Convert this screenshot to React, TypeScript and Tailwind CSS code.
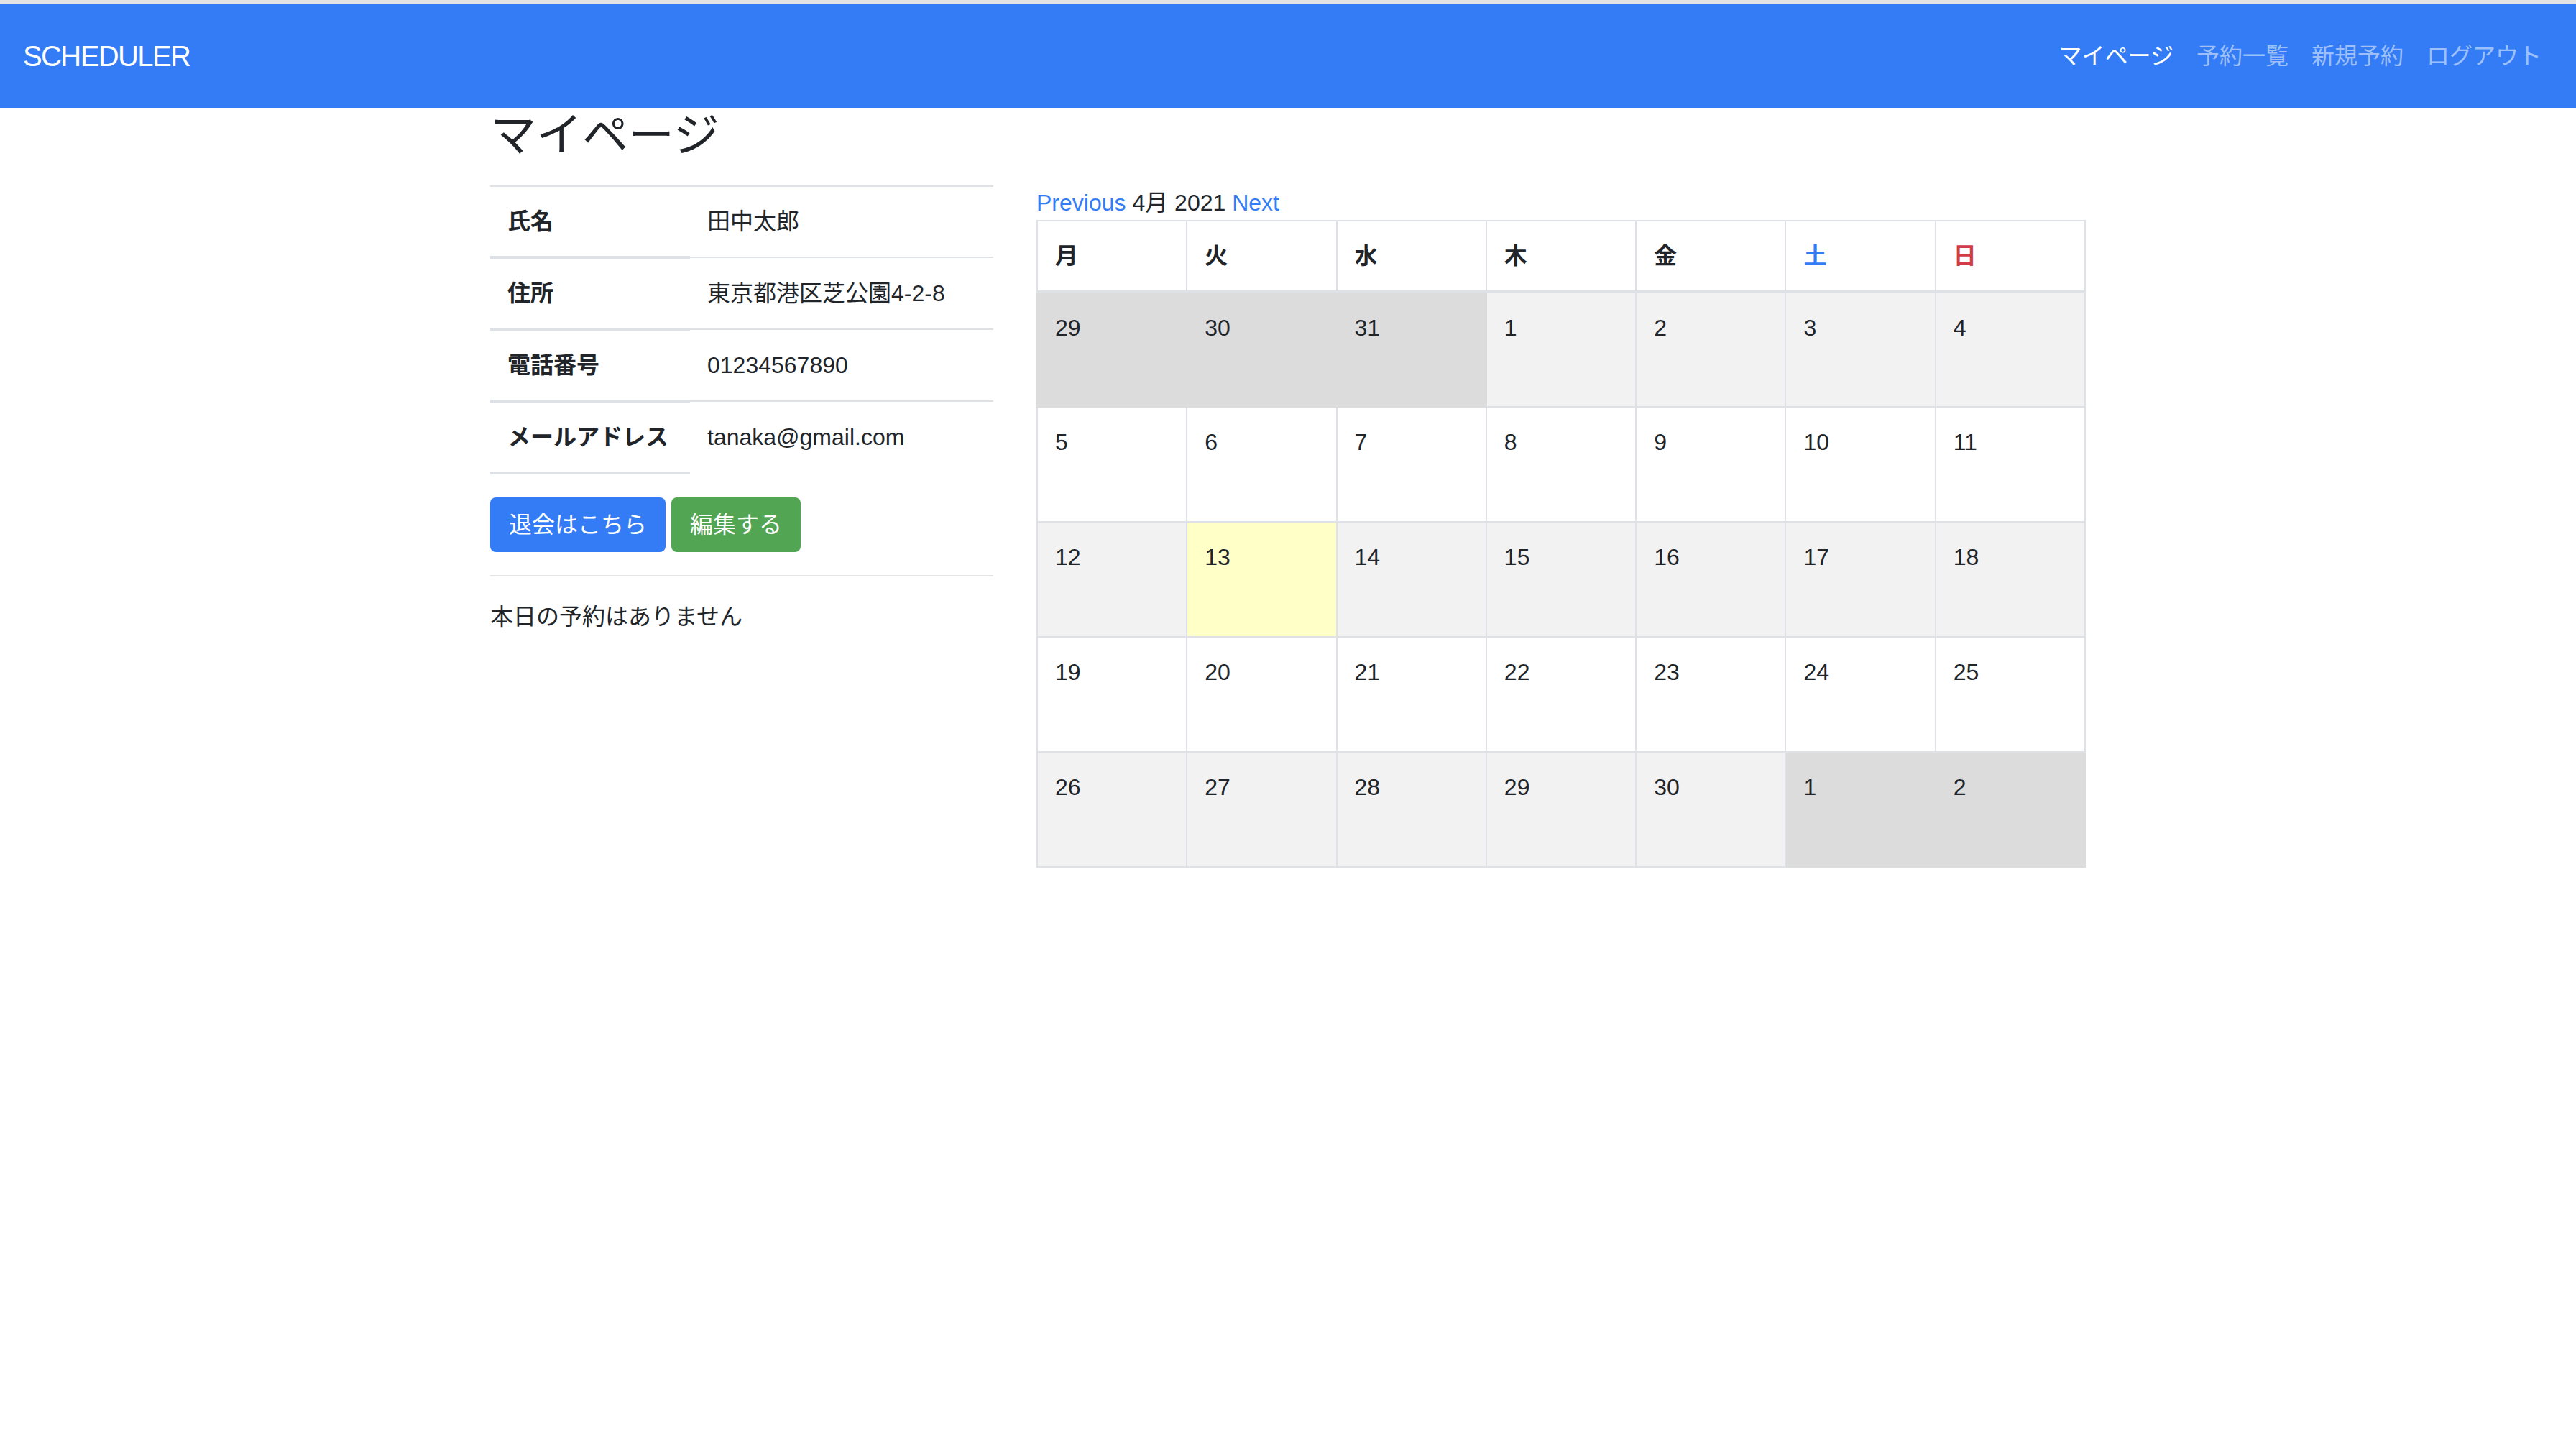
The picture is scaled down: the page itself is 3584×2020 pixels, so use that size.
const BLUE = "text-[#337cf6]";

type Cell = { day: number; other?: boolean; today?: boolean };

const weeks: Cell[][] = [
  [{ day: 29, other: true }, { day: 30, other: true }, { day: 31, other: true }, { day: 1 }, { day: 2 }, { day: 3 }, { day: 4 }],
  [5, 6, 7, 8, 9, 10, 11].map((d) => ({ day: d })),
  [12, 13, 14, 15, 16, 17, 18].map((d) => ({ day: d, today: d === 13 })),
  [19, 20, 21, 22, 23, 24, 25].map((d) => ({ day: d })),
  [{ day: 26 }, { day: 27 }, { day: 28 }, { day: 29 }, { day: 30 }, { day: 1, other: true }, { day: 2, other: true }],
];

const profile = [
  ["氏名", "田中太郎"],
  ["住所", "東京都港区芝公園4-2-8"],
  ["電話番号", "01234567890"],
  ["メールアドレス", "tanaka@gmail.com"],
];

const headers = [
  { label: "月", color: "" },
  { label: "火", color: "" },
  { label: "水", color: "" },
  { label: "木", color: "" },
  { label: "金", color: "" },
  { label: "土", color: BLUE },
  { label: "日", color: "text-[#d23c48]" },
];

function Navbar() {
  return (
    <nav className="flex h-[145px] items-center justify-between bg-[#337cf6] px-[32px]">
      <span className="text-[40px] leading-[60px] tracking-[-1.6px] text-white">SCHEDULER</span>
      <ul className="flex text-[32px] leading-[48px]">
        <li className="px-[16px] text-white">マイページ</li>
        <li className="px-[16px] text-[#9dc0fb]">予約一覧</li>
        <li className="px-[16px] text-[#9dc0fb]">新規予約</li>
        <li className="px-[16px] text-[#9dc0fb]">ログアウト</li>
      </ul>
    </nav>
  );
}

function Profile() {
  return (
    <div className="w-[700px] shrink-0">
      <table className="mb-[32px] w-full border-collapse">
        <tbody>
          {profile.map(([k, v]) => (
            <tr key={k}>
              <th className="w-[278px] border-t-2 border-b-4 border-[#dee2e6] px-[24px] py-[24px] text-left font-bold">
                {k}
              </th>
              <td className="border-t-2 border-[#dee2e6] px-[24px] py-[24px]">{v}</td>
            </tr>
          ))}
        </tbody>
      </table>
      <div className="flex gap-[8px]">
        <button className="h-[76px] rounded-[8px] bg-[#337cf6] px-[26px] text-white">退会はこちら</button>
        <button className="h-[76px] rounded-[8px] bg-[#52a552] px-[26px] text-white">編集する</button>
      </div>
      <hr className="my-[32px] border-t-2 border-black/10" />
      <p>本日の予約はありません</p>
    </div>
  );
}

function Calendar() {
  return (
    <div className="w-[1460px] shrink-0">
      <div>
        <span className={BLUE}>Previous</span> 4月 2021 <span className={BLUE}>Next</span>
      </div>
      <table className="w-full table-fixed border-collapse border-2 border-[#dee2e6]">
        <thead>
          <tr>
            {headers.map((h) => (
              <th
                key={h.label}
                className={`border-2 border-b-4 border-[#dee2e6] px-[24px] py-[24px] text-left font-bold ${h.color}`}
              >
                {h.label}
              </th>
            ))}
          </tr>
        </thead>
        <tbody>
          {weeks.map((w, i) => (
            <tr key={i} className={i % 2 === 0 ? "bg-[#f2f2f2]" : "bg-white"}>
              {w.map((c, j) => (
                <td
                  key={j}
                  className={`h-[160px] border-2 px-[24px] py-[24px] align-top ${
                    c.other
                      ? "border-[#dcdcdc] bg-[#dcdcdc]"
                      : c.today
                        ? "border-[#dee2e6] bg-[#ffffc8]"
                        : "border-[#dee2e6]"
                  }`}
                >
                  {c.day}
                </td>
              ))}
            </tr>
          ))}
        </tbody>
      </table>
    </div>
  );
}

export default function App() {
  return (
    <div className="min-h-screen bg-white font-['Liberation_Sans','Noto_Sans_CJK_JP',sans-serif] text-[32px] leading-[48px] text-[#212529]">
      <div className="h-[5px] bg-[#e3e3e3]" />
      <Navbar />
      <main className="mx-auto w-[2220px]">
        <h2 className="mb-[31px] text-[64px] leading-[1.2] font-normal">マイページ</h2>
        <div className="flex gap-[60px]">
          <Profile />
          <Calendar />
        </div>
      </main>
    </div>
  );
}
